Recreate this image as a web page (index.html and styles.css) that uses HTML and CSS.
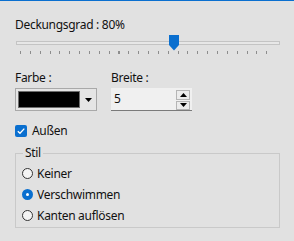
FILE: index.html
```html
<!DOCTYPE html>
<html lang="de">
<head>
	<meta charset="UTF-8">
	<title>Schatten</title>
	<link rel="stylesheet" href="styles.css">
</head>
<body>

<div class="panel">
	<div class="caption">Deckungsgrad : 80%</div>

	<div class="slider">
		<div class="track"></div>
		<div class="ticks"></div>
		<svg class="thumb" width="10" height="16" viewBox="0 0 10 16">
			<path d="M0 0 H10 V10 L5 15.5 L0 10 Z" fill="#0a6fcf" />
		</svg>
	</div>

	<div class="fields">
		<div class="field">
			<label>Farbe :</label>
			<div class="colorbox">
				<span class="swatch"></span>
				<span class="drop">
					<svg width="7" height="4" viewBox="0 0 7 4"><path d="M0 0 H7 L3.5 4 Z" fill="#000" /></svg>
				</span>
			</div>
		</div>
		<div class="field">
			<label>Breite :</label>
			<div class="spinbox">
				<span class="value">5</span>
				<span class="spin">
					<span class="btn"><svg width="7" height="4" viewBox="0 0 7 4"><path d="M0 4 H7 L3.5 0 Z" fill="#000" /></svg></span>
					<span class="btn"><svg width="7" height="4" viewBox="0 0 7 4"><path d="M0 0 H7 L3.5 4 Z" fill="#000" /></svg></span>
				</span>
			</div>
		</div>
	</div>

	<div class="check">
		<span class="box">
			<svg width="10" height="10" viewBox="0 0 10 10"><path d="M1.8 5.2 L4 7.3 L8.3 2.6" fill="none" stroke="#fff" stroke-width="1.3" /></svg>
		</span>
		Außen
	</div>

	<fieldset class="group">
		<legend>Stil</legend>
		<div class="radio"><span class="dot"></span>Keiner</div>
		<div class="radio"><span class="dot on"></span>Verschwimmen</div>
		<div class="radio"><span class="dot"></span>Kanten auflösen</div>
	</fieldset>
</div>

</body>
</html>
```

FILE: styles.css
```css
body {
	margin: 0;
	background: #e1e1e1;
	border-top: 1px solid #0a6fcf;
	font-family: "Noto Sans", "Liberation Sans", sans-serif;
	font-size: 12px;
	letter-spacing: -0.3px;
	line-height: 16px;
	color: #111;
}
.panel {
	padding: 16px 14px 0 15px;
}

/* opacity slider */
.slider {
	position: relative;
	height: 20px;
	margin-top: 2px;
}
.track {
	position: absolute;
	top: 6px;
	left: 1px;
	right: 0;
	height: 2px;
	background: #e7e7e7;
	border: 1px solid #c4c4c4;
}
.ticks {
	position: absolute;
	top: 16px;
	left: 5px;
	right: 4px;
	height: 3px;
	background: repeating-linear-gradient(to right, #8d8d8d 0 1px, transparent 1px 9.85px);
}
.thumb {
	position: absolute;
	top: 0;
	left: 154px;
}

/* colour + width */
.fields {
	display: grid;
	grid-template-columns: 82px 81px;
	column-gap: 14px;
	margin-top: 15px;
}
.field label {
	display: block;
	margin-bottom: 2px;
}
.colorbox {
	display: flex;
	height: 21px;
	border: 1px solid #a9a9a9;
	background: #e5e5e5;
}
.swatch {
	flex: 1;
	margin: 2px 0 2px 2px;
	background: #000;
	border: 1px solid #6d6d6d;
}
.drop {
	width: 16px;
	display: flex;
	align-items: center;
	justify-content: center;
}
.spinbox {
	display: flex;
	height: 22px;
	background: #f0f0f0;
	border-bottom: 1px solid #7a7a7a;
}
.value {
	flex: 1;
	padding: 3px 0 0 3px;
}
.spin {
	display: flex;
	flex-direction: column;
	gap: 1px;
	padding: 2px 2px 0 0;
}
.btn {
	width: 12px;
	height: 8px;
	border: 1px solid #b5b5b5;
	background: #ececec;
	display: flex;
	align-items: center;
	justify-content: center;
}

/* outside checkbox */
.check {
	display: flex;
	align-items: center;
	gap: 5px;
	margin-top: 12px;
}
.check .box {
	width: 12px;
	height: 12px;
	border-radius: 2px;
	background: #0a6fcf;
	display: flex;
	align-items: center;
	justify-content: center;
}

/* style group */
.group {
	margin: 6px 0 0 0;
	padding: 2px 0 1px 6px;
	border: 1px solid #c9c9c9;
}
.group legend {
	padding: 0 2px;
	margin-left: 1px;
}
.radio {
	display: flex;
	align-items: center;
	gap: 4px;
	height: 21px;
}
.dot {
	width: 11px;
	height: 11px;
	border: 1px solid #333;
	border-radius: 50%;
	background: #f4f4f4;
	box-sizing: border-box;
}
.dot.on {
	border: 4px solid #0a6fcf;
	background: #fff;
}
```
